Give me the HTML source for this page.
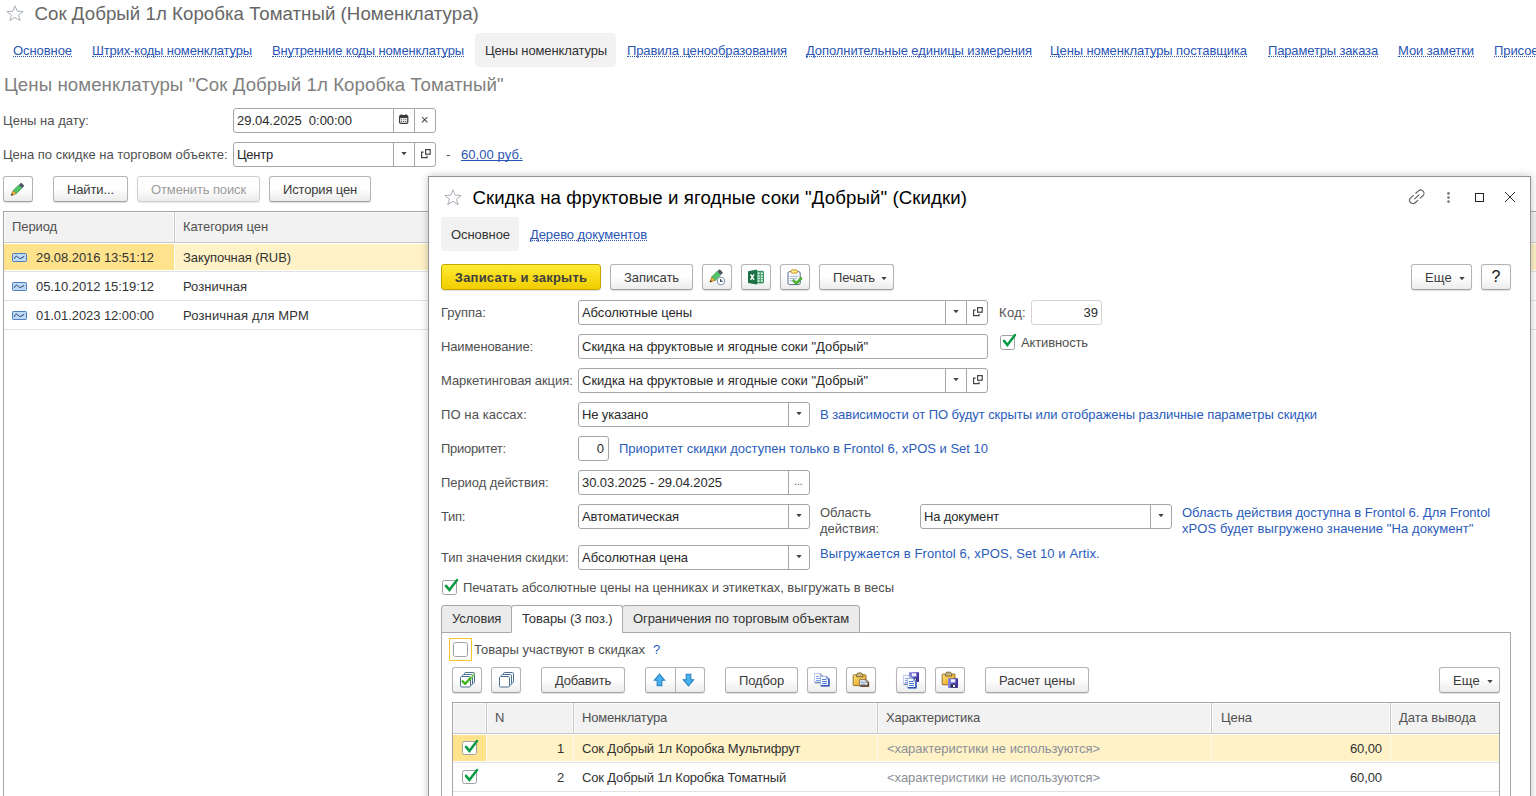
<!DOCTYPE html>
<html lang="ru">
<head>
<meta charset="utf-8">
<title>Сок Добрый 1л Коробка Томатный (Номенклатура)</title>
<style>
*{box-sizing:border-box;margin:0;padding:0}
html,body{width:1536px;height:796px;overflow:hidden;background:#fff}
body{font-family:"Liberation Sans",Arial,sans-serif;font-size:13px;color:#333;position:relative}
.abs{position:absolute;white-space:nowrap}
.t{position:absolute;white-space:nowrap;line-height:16px;height:16px;color:#333}
.lnk{color:#2a55b5}
.nav{position:absolute;line-height:16px;white-space:nowrap;color:#2a55b5;border-bottom:1px dotted #2a55b5;height:14px}
.lbl{color:#505050}
.inp{position:absolute;height:25px;border:1px solid #a6a6a6;border-radius:3px;background:#fff;overflow:hidden}
.inp .v{position:absolute;left:3px;top:4px;line-height:16px;white-space:nowrap;color:#2a2a2a}
.inp .sep{position:absolute;top:0;bottom:0;width:1px;background:#a6a6a6}
.btn{position:absolute;height:26px;border:1px solid #b4b4b4;border-bottom-color:#a2a2a2;border-radius:3px;background:linear-gradient(#fff 0%,#fff 45%,#ececec 100%);box-shadow:0 1px 1px rgba(0,0,0,.13);text-align:center;line-height:25px;white-space:nowrap;color:#3a3a3a}
.btn.dis{color:#9c9c9c;border-color:#cdcdcd;box-shadow:0 1px 1px rgba(0,0,0,.08)}
.btn.yel{background:linear-gradient(#ffeb33,#f1cd00);border-color:#c6a500;font-weight:bold;color:#3f3f3f}
.hint{color:#2a5cbc}
.cb{position:absolute;width:15px;height:15px;border:1px solid #a0a0a0;border-radius:2.5px;background:#fff}
.tab{position:absolute;height:28px;border:1px solid #a8a8a8;background:#ebebeb;white-space:nowrap;color:#333;border-radius:3px 3px 0 0}
.tab.act{background:#fff;border-bottom-color:#fff}
</style>
</head>
<body>
<svg class="abs" style="left:6px;top:5px;overflow:visible" width="18" height="17" viewBox="0 0 18 17" ><path d="M9 0.8 L11.2 6.2 L17.2 6.5 L12.5 10.1 L14.2 15.6 L9 12.3 L3.8 15.6 L5.5 10.1 L0.8 6.5 L6.8 6.2 Z" fill="none" stroke="#a9b0b7" stroke-width="1"/></svg>
<div class="abs" style="left:34.5px;top:3px;font-size:18.67px;line-height:22px;color:#666;letter-spacing:.045px">Сок Добрый 1л Коробка Томатный (Номенклатура)</div>
<div class="nav" style="left:13px;top:43px;letter-spacing:-0.071px;">Основное</div>
<div class="nav" style="left:92px;top:43px;letter-spacing:-0.159px;">Штрих-коды номенклатуры</div>
<div class="nav" style="left:272px;top:43px;letter-spacing:-0.132px;">Внутренние коды номенклатуры</div>
<div class="abs" style="left:475px;top:33px;width:141px;height:34px;background:#f2f2f2;border-radius:4px"></div>
<div class="t " style="left:485px;top:43px;letter-spacing:-0.125px;color:#333">Цены номенклатуры</div>
<div class="nav" style="left:627px;top:43px;letter-spacing:-0.124px;">Правила ценообразования</div>
<div class="nav" style="left:806px;top:43px;letter-spacing:-0.078px;">Дополнительные единицы измерения</div>
<div class="nav" style="left:1050px;top:43px;letter-spacing:-0.093px;">Цены номенклатуры поставщика</div>
<div class="nav" style="left:1268px;top:43px;letter-spacing:-0.147px;">Параметры заказа</div>
<div class="nav" style="left:1398px;top:43px;letter-spacing:-0.083px;">Мои заметки</div>
<div class="nav" style="left:1494px;top:43px;letter-spacing:-0.079px;">Присоединенные файлы</div>
<div class="abs" style="left:4px;top:74px;font-size:18.67px;line-height:22px;color:#7f7f7f;letter-spacing:.07px">Цены номенклатуры "Сок Добрый 1л Коробка Томатный"</div>
<div class="t lbl" style="left:3px;top:113px;letter-spacing:0.020px;">Цены на дату:</div>
<div class="inp" style="left:233px;top:108px;width:203px;"><span class="v" style="letter-spacing:-0.035px;">29.04.2025&nbsp; 0:00:00</span><i class="sep" style="left:159px"></i><i class="sep" style="left:180px"></i></div>
<svg class="abs" style="left:399px;top:114px;overflow:visible" width="10" height="10" viewBox="0 0 10 10" ><rect x=".6" y="1.7" width="8.2" height="7.6" rx="1" fill="#fff" stroke="#3c3c3c" stroke-width="1.2"/><rect x=".6" y="1.7" width="8.2" height="2.3" fill="#3c3c3c"/><path d="M2.5 0.2 V2 M6.9 0.2 V2" stroke="#3c3c3c" stroke-width="1.4"/><path d="M2 5.3 H3.2 M4.1 5.3 H5.3 M6.2 5.3 H7.4 M2 7.4 H3.2 M4.1 7.4 H5.3 M6.2 7.4 H7.4" stroke="#555" stroke-width="1.1"/></svg>
<svg class="abs" style="left:422px;top:117px;overflow:visible" width="5.4" height="5.4" viewBox="0 0 5.4 5.4" ><path d="M0 0 L5.4 5.4 M5.4 0 L0 5.4" stroke="#3c3c3c" stroke-width="1.05"/></svg>
<div class="t lbl" style="left:3px;top:147px;letter-spacing:-0.013px;">Цена по скидке на торговом объекте:</div>
<div class="inp" style="left:233px;top:142px;width:203px;"><span class="v" style="letter-spacing:-0.242px;">Центр</span><i class="sep" style="left:159px"></i><i class="sep" style="left:180px"></i></div>
<svg class="abs" style="left:401px;top:152px;overflow:visible" width="6" height="4" viewBox="0 0 6 4" ><path d="M.3 0 H5.7 L3 3.3 Z" fill="#444"/></svg>
<svg class="abs" style="left:421px;top:149px;overflow:visible" width="10" height="9" viewBox="0 0 10 9" ><rect x="4.6" y=".6" width="4.6" height="4.6" fill="none" stroke="#444" stroke-width="1.2"/><path d="M2.6 3.2 H.6 V8.6 H6 V6.8" fill="none" stroke="#444" stroke-width="1.2"/></svg>
<div class="t lbl" style="left:446px;top:147px;letter-spacing:-0.329px;">-</div>
<div class="t lnk" style="left:461px;top:147px;letter-spacing:0.077px;text-decoration:underline;text-underline-offset:1px;text-decoration-skip-ink:none;text-decoration-thickness:1px">60,00 руб.</div>
<div class="btn " style="left:3px;top:176px;width:30px;"></div>
<svg class="abs" style="left:3px;top:176px;overflow:visible" width="30" height="26" viewBox="0 0 30 26" ><g transform="translate(8,19.6) rotate(-44.0)"><polygon points="0,0 5.41,-2.3 5.41,2.3" fill="#f5b543" stroke="#9a6c25" stroke-width=".7" stroke-linejoin="round"/><polygon points="0,0 2.06,-0.87 2.06,0.87" fill="#3d2a10"/><rect x="5.41" y="-2.3" width="7.55" height="4.6" fill="#52c468" stroke="#2f9a48" stroke-width=".6"/><rect x="12.96" y="-2.3" width="3.45" height="4.6" rx=".9" fill="#4a5666"/></g></svg>
<div class="btn " style="left:53px;top:176px;width:75px;"><span style="letter-spacing:-0.116px;">Найти...</span></div>
<div class="btn dis" style="left:137px;top:176px;width:123px;"><span style="letter-spacing:-0.124px;">Отменить поиск</span></div>
<div class="btn " style="left:269px;top:176px;width:102px;"><span style="letter-spacing:-0.158px;">История цен</span></div>
<div class="abs" style="left:3px;top:211px;width:1540px;height:600px;border:1px solid #a6a6a6;background:#fff"></div>
<div class="abs" style="left:4px;top:212px;width:1532px;height:30px;background:#f2f2f2;box-shadow:inset 1px 1px 0 #fbfbfb"></div>
<div class="abs" style="left:4px;top:242px;width:1532px;height:1px;background:#c8c8c8"></div>
<div class="abs" style="left:173px;top:212px;width:1px;height:30px;background:#fbfbfb"></div>
<div class="abs" style="left:174px;top:212px;width:1px;height:30px;background:#c8c8c8"></div>
<div class="abs" style="left:175px;top:212px;width:1px;height:30px;background:#fbfbfb"></div>
<div class="t lbl" style="left:12px;top:219px;letter-spacing:-0.099px;">Период</div>
<div class="t lbl" style="left:183px;top:219px;letter-spacing:-0.084px;">Категория цен</div>
<div class="abs" style="left:4px;top:244px;width:170px;height:26px;background:#ffe28c"></div>
<div class="abs" style="left:175px;top:244px;width:1361px;height:26px;background:#fff2c7"></div>
<div class="abs" style="left:4px;top:271px;width:1532px;height:1px;background:#e2e2e2"></div>
<div class="abs" style="left:4px;top:300px;width:1532px;height:1px;background:#e2e2e2"></div>
<div class="abs" style="left:4px;top:329px;width:1532px;height:1px;background:#e2e2e2"></div>
<svg class="abs" style="left:12px;top:253px;overflow:visible" width="15" height="9" viewBox="0 0 15 9" ><rect x=".5" y=".5" width="14" height="8" rx=".8" fill="#bfd8f3" stroke="#4f7fbf"/><path d="M2.4 5.8 C3.6 2.6 4.8 2.6 6.2 4.4 S8.6 5.6 12.2 3.4" fill="none" stroke="#17376f" stroke-width="1"/></svg>
<div class="t " style="left:36px;top:250px;letter-spacing:-0.067px;">29.08.2016 13:51:12</div>
<div class="t " style="left:183px;top:250px;letter-spacing:-0.084px;">Закупочная (RUB)</div>
<svg class="abs" style="left:12px;top:282px;overflow:visible" width="15" height="9" viewBox="0 0 15 9" ><rect x=".5" y=".5" width="14" height="8" rx=".8" fill="#bfd8f3" stroke="#4f7fbf"/><path d="M2.4 5.8 C3.6 2.6 4.8 2.6 6.2 4.4 S8.6 5.6 12.2 3.4" fill="none" stroke="#17376f" stroke-width="1"/></svg>
<div class="t " style="left:36px;top:279px;letter-spacing:-0.067px;">05.10.2012 15:19:12</div>
<div class="t " style="left:183px;top:279px;letter-spacing:0.021px;">Розничная</div>
<svg class="abs" style="left:12px;top:311px;overflow:visible" width="15" height="9" viewBox="0 0 15 9" ><rect x=".5" y=".5" width="14" height="8" rx=".8" fill="#bfd8f3" stroke="#4f7fbf"/><path d="M2.4 5.8 C3.6 2.6 4.8 2.6 6.2 4.4 S8.6 5.6 12.2 3.4" fill="none" stroke="#17376f" stroke-width="1"/></svg>
<div class="t " style="left:36px;top:308px;letter-spacing:-0.067px;">01.01.2023 12:00:00</div>
<div class="t " style="left:183px;top:308px;letter-spacing:0.152px;">Розничная для МРМ</div>
<div class="abs" style="left:428px;top:176px;width:1103px;height:640px;background:#fff;border:1px solid #939393;box-shadow:0 0 8px rgba(0,0,0,.24)"></div>
<svg class="abs" style="left:444px;top:189px;overflow:visible" width="18" height="17" viewBox="0 0 18 17" ><path d="M9 0.8 L11.2 6.2 L17.2 6.5 L12.5 10.1 L14.2 15.6 L9 12.3 L3.8 15.6 L5.5 10.1 L0.8 6.5 L6.8 6.2 Z" fill="none" stroke="#a9b0b7" stroke-width="1"/></svg>
<div class="abs" style="left:472.5px;top:187px;font-size:18.67px;line-height:22px;color:#000;letter-spacing:.085px">Скидка на фруктовые и ягодные соки "Добрый" (Скидки)</div>
<svg class="abs" style="left:1408.5px;top:188.5px;overflow:visible" width="16" height="16" viewBox="0 0 16 16" ><g transform="translate(7.8,7.8) rotate(-42)" fill="none" stroke="#5c5c5c" stroke-width="1.1" stroke-linecap="round"><path d="M-1.6 -3.3 H-5.2 A3.3 3.3 0 0 0 -5.2 3.3 H-1.6"/><path d="M1.6 -3.3 H5.2 A3.3 3.3 0 0 1 5.2 3.3 H1.6"/><path d="M-3 0 H3"/></g></svg>
<svg class="abs" style="left:1446px;top:191px;overflow:visible" width="5" height="13" viewBox="0 0 5 13" ><circle cx="2.5" cy="2.4" r="1.35" fill="#777"/><circle cx="2.5" cy="6.5" r="1.35" fill="#777"/><circle cx="2.5" cy="10.6" r="1.35" fill="#777"/></svg>
<div class="abs" style="left:1475px;top:193px;width:9px;height:9px;border:1px solid #222"></div>
<svg class="abs" style="left:1505px;top:192px;overflow:visible" width="10" height="10" viewBox="0 0 10 10" ><path d="M0 0 L10 10 M10 0 L0 10" stroke="#333" stroke-width="1"/></svg>
<div class="abs" style="left:441px;top:217px;width:78px;height:34px;background:#f2f2f2;border-radius:4px"></div>
<div class="t " style="left:451px;top:227px;letter-spacing:-0.071px;color:#333">Основное</div>
<div class="nav" style="left:530px;top:227px;letter-spacing:-0.082px;">Дерево документов</div>
<div class="btn yel" style="left:441px;top:264px;width:160px;"><span style="letter-spacing:0.192px;">Записать и закрыть</span></div>
<div class="btn " style="left:610px;top:264px;width:83px;"><span style="letter-spacing:-0.069px;">Записать</span></div>
<div class="btn " style="left:702px;top:264px;width:30px;"></div>
<svg class="abs" style="left:702px;top:264px;overflow:visible" width="30" height="26" viewBox="0 0 30 26" ><g transform="translate(7.9,18.1) rotate(-44.5)"><polygon points="0,0 5.27,-2.5 5.27,2.5" fill="#f5b543" stroke="#9a6c25" stroke-width=".7" stroke-linejoin="round"/><polygon points="0,0 2.00,-0.95 2.00,0.95" fill="#3d2a10"/><rect x="5.27" y="-2.5" width="7.35" height="5.0" fill="#52c468" stroke="#2f9a48" stroke-width=".6"/><rect x="12.63" y="-2.5" width="3.36" height="5.0" rx=".9" fill="#4a5666"/></g><circle cx="19" cy="17" r="3.7" fill="#fff" stroke="#7d9ab8" stroke-width="1.1"/><path d="M18.6 15.2 V17.3 H20.6" fill="none" stroke="#1c2430" stroke-width="1.1"/></svg>
<div class="btn " style="left:741px;top:264px;width:30px;"></div>
<svg class="abs" style="left:741px;top:264px;overflow:visible" width="30" height="26" viewBox="0 0 30 26" ><rect x="15" y="7.3" width="7.4" height="11.6" rx=".6" fill="#4fa578" stroke="#2c8a57" stroke-width="1"/><path d="M16.6 9.3 H18.6 M20 9.3 H21.8 M16.6 11.9 H18.6 M20 11.9 H21.8 M16.6 14.5 H18.6 M20 14.5 H21.8 M16.6 17.1 H18.6 M20 17.1 H21.8" stroke="#e4f3ea" stroke-width="1.5"/><polygon points="7,7.2 16,5.4 16,20.6 7,18.9" fill="#1d7245"/><path d="M9.6 10.4 L13 15.9 M13 10.4 L9.6 15.9" stroke="#fff" stroke-width="1.4"/></svg>
<div class="btn " style="left:780px;top:264px;width:30px;"></div>
<svg class="abs" style="left:780px;top:264px;overflow:visible" width="30" height="26" viewBox="0 0 30 26" ><rect x="8" y="7.6" width="12.2" height="13" rx="1.6" fill="#f8fbff" stroke="#566a88" stroke-width="1"/><rect x="11" y="5.9" width="6.4" height="3.2" rx="1.2" fill="#fff38a" stroke="#c68c1c" stroke-width="1"/><path d="M10 12.4 H18 M10 14.6 H17 M10 16.8 H12.5" stroke="#9fb0c6" stroke-width=".9"/><path d="M13.6 16.6 L16.4 19.3 L21 14.4" fill="none" stroke="#2f9a1c" stroke-width="2.5" stroke-linecap="round" stroke-linejoin="round"/><path d="M13.7 16.4 L16.4 18.9 L20.9 14.2" fill="none" stroke="#5cc93a" stroke-width="1.1" stroke-linecap="round" stroke-linejoin="round"/></svg>
<div class="btn " style="left:819px;top:264px;width:75px;"><span style="position:absolute;left:13px;top:0;letter-spacing:-0.098px;">Печать</span></div>
<svg class="abs" style="left:881px;top:277px;overflow:visible" width="6" height="4" viewBox="0 0 6 4" ><path d="M.3 0 H5.7 L3 3.3 Z" fill="#444"/></svg>
<div class="btn " style="left:1411px;top:264px;width:61px;"><span style="position:absolute;left:13px;top:0;letter-spacing:0.183px;">Еще</span></div>
<svg class="abs" style="left:1459px;top:277px;overflow:visible" width="6" height="4" viewBox="0 0 6 4" ><path d="M.3 0 H5.7 L3 3.3 Z" fill="#444"/></svg>
<div class="btn " style="left:1481px;top:264px;width:30px;"></div>
<div class="abs" style="left:1481px;top:264px;width:30px;text-align:center;font-size:16px;line-height:25px;color:#111">?</div>
<div class="t lbl" style="left:441px;top:305px;letter-spacing:0.027px;">Группа:</div>
<div class="inp" style="left:578px;top:300px;width:410px;"><span class="v" style="letter-spacing:-0.065px;">Абсолютные цены</span><i class="sep" style="left:366px"></i><i class="sep" style="left:387px"></i></div>
<svg class="abs" style="left:953px;top:310px;overflow:visible" width="6" height="4" viewBox="0 0 6 4" ><path d="M.3 0 H5.7 L3 3.3 Z" fill="#444"/></svg>
<svg class="abs" style="left:973px;top:307px;overflow:visible" width="10" height="9" viewBox="0 0 10 9" ><rect x="4.6" y=".6" width="4.6" height="4.6" fill="none" stroke="#444" stroke-width="1.2"/><path d="M2.6 3.2 H.6 V8.6 H6 V6.8" fill="none" stroke="#444" stroke-width="1.2"/></svg>
<div class="t lbl" style="left:999px;top:305px;letter-spacing:0.321px;">Код:</div>
<div class="inp" style="left:1031px;top:300px;width:71px;border-color:#d4d4d4"><span class="v" style="left:auto;right:3px">39</span></div>
<div class="t lbl" style="left:441px;top:339px;letter-spacing:-0.133px;">Наименование:</div>
<div class="inp" style="left:578px;top:334px;width:410px;"><span class="v" style="letter-spacing:-0.009px;">Скидка на фруктовые и ягодные соки "Добрый"</span></div>
<div class="cb" style="left:1000px;top:335px;width:15px;height:15px"></div>
<svg class="abs" style="left:1000px;top:335px;overflow:visible" width="16" height="15" viewBox="0 0 16 15" ><path d="M4 5.9 L7.4 9.9 L15 0" fill="none" stroke="#089a42" stroke-width="2.5" stroke-linecap="round" stroke-linejoin="miter"/></svg>
<div class="t lbl" style="left:1021px;top:335px;letter-spacing:-0.126px;">Активность</div>
<div class="t lbl" style="left:441px;top:373px;letter-spacing:-0.068px;">Маркетинговая акция:</div>
<div class="inp" style="left:578px;top:368px;width:410px;"><span class="v" style="letter-spacing:-0.009px;">Скидка на фруктовые и ягодные соки "Добрый"</span><i class="sep" style="left:366px"></i><i class="sep" style="left:387px"></i></div>
<svg class="abs" style="left:953px;top:378px;overflow:visible" width="6" height="4" viewBox="0 0 6 4" ><path d="M.3 0 H5.7 L3 3.3 Z" fill="#444"/></svg>
<svg class="abs" style="left:973px;top:375px;overflow:visible" width="10" height="9" viewBox="0 0 10 9" ><rect x="4.6" y=".6" width="4.6" height="4.6" fill="none" stroke="#444" stroke-width="1.2"/><path d="M2.6 3.2 H.6 V8.6 H6 V6.8" fill="none" stroke="#444" stroke-width="1.2"/></svg>
<div class="t lbl" style="left:441px;top:407px;letter-spacing:0.097px;">ПО на кассах:</div>
<div class="inp" style="left:578px;top:402px;width:232px;"><span class="v" style="letter-spacing:-0.139px;">Не указано</span><i class="sep" style="left:209px"></i></div>
<svg class="abs" style="left:796px;top:412px;overflow:visible" width="6" height="4" viewBox="0 0 6 4" ><path d="M.3 0 H5.7 L3 3.3 Z" fill="#444"/></svg>
<div class="t hint" style="left:820px;top:407px;letter-spacing:-0.046px;">В зависимости от ПО будут скрыты или отображены различные параметры скидки</div>
<div class="t lbl" style="left:441px;top:441px;letter-spacing:-0.293px;">Приоритет:</div>
<div class="inp" style="left:578px;top:436px;width:31px"><span class="v" style="left:auto;right:4px">0</span></div>
<div class="t hint" style="left:619px;top:441px;letter-spacing:-0.003px;">Приоритет скидки доступен только в Frontol 6, xPOS и Set 10</div>
<div class="t lbl" style="left:441px;top:475px;letter-spacing:-0.066px;">Период действия:</div>
<div class="inp" style="left:578px;top:470px;width:232px;"><span class="v" style="letter-spacing:-0.073px;">30.03.2025 - 29.04.2025</span><i class="sep" style="left:209px"></i></div>
<div class="t" style="left:794px;top:474px;color:#4a4a4a;font-size:10px;letter-spacing:.1px">...</div>
<div class="t lbl" style="left:441px;top:509px;letter-spacing:-0.321px;">Тип:</div>
<div class="inp" style="left:578px;top:504px;width:232px;"><span class="v" style="letter-spacing:-0.084px;">Автоматическая</span><i class="sep" style="left:209px"></i></div>
<svg class="abs" style="left:796px;top:514px;overflow:visible" width="6" height="4" viewBox="0 0 6 4" ><path d="M.3 0 H5.7 L3 3.3 Z" fill="#444"/></svg>
<div class="abs lbl" style="left:820px;top:505px;line-height:16px"><span style="letter-spacing:-0.002px;">Область</span><br><span style="letter-spacing:-0.039px;">действия:</span></div>
<div class="inp" style="left:920px;top:504px;width:252px;"><span class="v" style="letter-spacing:-0.139px;">На документ</span><i class="sep" style="left:229px"></i></div>
<svg class="abs" style="left:1158px;top:514px;overflow:visible" width="6" height="4" viewBox="0 0 6 4" ><path d="M.3 0 H5.7 L3 3.3 Z" fill="#444"/></svg>
<div class="abs hint" style="left:1182px;top:505px;line-height:16px"><span style="letter-spacing:-0.026px;">Область действия доступна в Frontol 6. Для Frontol</span><br><span style="letter-spacing:0.069px;">xPOS будет выгружено значение "На документ"</span></div>
<div class="t lbl" style="left:441px;top:550px;letter-spacing:-0.008px;">Тип значения скидки:</div>
<div class="inp" style="left:578px;top:545px;width:232px;"><span class="v" style="letter-spacing:-0.038px;">Абсолютная цена</span><i class="sep" style="left:209px"></i></div>
<svg class="abs" style="left:796px;top:555px;overflow:visible" width="6" height="4" viewBox="0 0 6 4" ><path d="M.3 0 H5.7 L3 3.3 Z" fill="#444"/></svg>
<div class="t hint" style="left:820px;top:546px;letter-spacing:0.125px;">Выгружается в Frontol 6, xPOS, Set 10 и Artix.</div>
<div class="cb" style="left:442px;top:580px;width:15px;height:15px"></div>
<svg class="abs" style="left:442px;top:580px;overflow:visible" width="16" height="15" viewBox="0 0 16 15" ><path d="M4 5.9 L7.4 9.9 L15 0" fill="none" stroke="#089a42" stroke-width="2.5" stroke-linecap="round" stroke-linejoin="miter"/></svg>
<div class="t lbl" style="left:463px;top:580px;letter-spacing:-0.024px;">Печатать абсолютные цены на ценниках и этикетках, выгружать в весы</div>
<div class="abs" style="left:441px;top:632px;width:1070px;height:200px;border:1px solid #a8a8a8;background:#fff"></div>
<div class="tab" style="left:441px;top:605px;width:71px"></div>
<div class="tab act" style="left:511px;top:605px;width:112px"></div>
<div class="tab" style="left:622px;top:605px;width:238px"></div>
<div class="t " style="left:452px;top:611px;letter-spacing:-0.108px;color:#333">Условия</div>
<div class="t " style="left:522px;top:611px;letter-spacing:-0.062px;color:#333">Товары (3 поз.)</div>
<div class="t " style="left:633px;top:611px;letter-spacing:-0.090px;color:#333">Ограничения по торговым объектам</div>
<div class="abs" style="left:449px;top:638px;width:23px;height:23px;border:1px solid #f6c327"></div>
<div class="cb" style="left:453px;top:642px;width:15px;height:15px"></div>
<div class="t lbl" style="left:474px;top:642px;letter-spacing:0.012px;">Товары участвуют в скидках</div>
<div class="t hint" style="left:653px;top:642px;letter-spacing:-0.230px;">?</div>
<div class="btn " style="left:452px;top:667px;width:30px;"></div>
<svg class="abs" style="left:452px;top:667px;overflow:visible" width="30" height="26" viewBox="0 0 30 26" ><rect x="12.5" y="5.5" width="10" height="10.5" rx="1.2" fill="#fff" stroke="#4d7090" stroke-width="1"/><rect x="10.5" y="7.5" width="10" height="10.5" rx="1.2" fill="#fff" stroke="#4d7090" stroke-width="1"/><rect x="8.5" y="9.5" width="10" height="10.5" rx="1.2" fill="#fff" stroke="#4d7090" stroke-width="1"/><path d="M17.5 12.5 L21 9 L22.4 6.2" fill="none" stroke="#7fcf5a" stroke-width="2" opacity=".8"/><path d="M10.6 14.3 L13.2 16.8 L18.3 11.2" fill="none" stroke="#3fb51c" stroke-width="2.4" stroke-linecap="round" stroke-linejoin="round"/></svg>
<div class="btn " style="left:491px;top:667px;width:30px;"></div>
<svg class="abs" style="left:491px;top:667px;overflow:visible" width="30" height="26" viewBox="0 0 30 26" ><rect x="12.5" y="5.5" width="10" height="10.5" rx="1.2" fill="#fff" stroke="#4d7090" stroke-width="1"/><rect x="10.5" y="7.5" width="10" height="10.5" rx="1.2" fill="#fff" stroke="#4d7090" stroke-width="1"/><rect x="8.5" y="9.5" width="10" height="10.5" rx="1.2" fill="#fff" stroke="#4d7090" stroke-width="1"/></svg>
<div class="btn " style="left:541px;top:667px;width:84px;"><span style="letter-spacing:-0.182px;">Добавить</span></div>
<div class="btn " style="left:645px;top:667px;width:60px;"></div>
<div class="abs" style="left:675px;top:668px;width:1px;height:24px;background:#b2b2b2"></div>
<svg class="abs" style="left:645px;top:667px;overflow:visible" width="60" height="26" viewBox="0 0 60 26" ><path d="M14.5 7.2 L19.6 13.2 H16.8 V18.8 H12.2 V13.2 H9.4 Z" fill="#48b1ef" stroke="#2680c0" stroke-width="1.1" stroke-linejoin="miter"/><path d="M43.5 18.8 L48.6 12.8 H45.8 V7.2 H41.2 V12.8 H38.4 Z" fill="#48b1ef" stroke="#2680c0" stroke-width="1.1" stroke-linejoin="miter"/></svg>
<div class="btn " style="left:725px;top:667px;width:73px;"><span style="letter-spacing:-0.130px;">Подбор</span></div>
<div class="btn " style="left:807px;top:667px;width:30px;"></div>
<svg class="abs" style="left:807px;top:667px;overflow:visible" width="30" height="26" viewBox="0 0 30 26" ><path d="M7.5 6.4 H13.200000000000001 L15.8 9.0 V15.8 H7.5 Z" fill="#fff" stroke="#a9bce6" stroke-width=".8" stroke-linejoin="round"/><path d="M15.5 9.0 V15.5 H8.1" fill="none" stroke="#6f86bd" stroke-width="1.5"/><path d="M13.200000000000001 6.4 V9.0 H15.8 Z" fill="#dfe8fa" stroke="#6f86bd" stroke-width=".6" stroke-linejoin="round"/><path d="M9.2 9.5 H12.2 M9.2 11.5 H13.6 M9.2 13.5 H13.6 " stroke="#7aa2ea" stroke-width="1" shape-rendering="crispEdges"/><path d="M13.4 9.4 H19.6 L22.200000000000003 12.0 V19.0 H13.4 Z" fill="#fff" stroke="#8fa8dc" stroke-width=".8" stroke-linejoin="round"/><path d="M21.900000000000002 12.0 V18.7 H14.0" fill="none" stroke="#2b52b4" stroke-width="1.5"/><path d="M19.6 9.4 V12.0 H22.200000000000003 Z" fill="#dfe8fa" stroke="#2b52b4" stroke-width=".6" stroke-linejoin="round"/><path d="M15.1 12.5 H18.6 M15.1 14.5 H20.0 M15.1 16.5 H20.0 " stroke="#4478de" stroke-width="1" shape-rendering="crispEdges"/></svg>
<div class="btn " style="left:846px;top:667px;width:30px;"></div>
<svg class="abs" style="left:846px;top:667px;overflow:visible" width="30" height="26" viewBox="0 0 30 26" ><defs><linearGradient id="gcl1" x1="0" y1="0" x2="1" y2="1"><stop offset="0" stop-color="#ffe682"/><stop offset="1" stop-color="#e8960a"/></linearGradient></defs><rect x="7.2" y="7.8" width="12.8" height="10.8" rx=".8" fill="url(#gcl1)" stroke="#8a6418" stroke-width=".9"/><path d="M10.200000000000001 9.8 L11.600000000000001 6.0 H15.600000000000001 L17.0 9.8 Z" fill="#e6d38c" stroke="#6f5a2a" stroke-width=".9" stroke-linejoin="round"/><circle cx="13.600000000000001" cy="7.8999999999999995" r=".9" fill="#fff" stroke="#6f5a2a" stroke-width=".5"/><path d="M13.6 12.6 H20.0 L22.6 15.2 V19.2 H13.6 Z" fill="#dde6f3" stroke="#7a6a58" stroke-width=".8" stroke-linejoin="round"/><path d="M22.3 15.2 V18.9 H14.2" fill="none" stroke="#5a3a1a" stroke-width="1.5"/><path d="M20.0 12.6 V15.2 H22.6 Z" fill="#dfe8fa" stroke="#5a3a1a" stroke-width=".6" stroke-linejoin="round"/><path d="M15.299999999999999 15.5 H19.0 M15.299999999999999 17.5 H20.4 " stroke="#8c9cc0" stroke-width="1" shape-rendering="crispEdges"/></svg>
<div class="btn " style="left:896px;top:667px;width:30px;"></div>
<svg class="abs" style="left:896px;top:667px;overflow:visible" width="30" height="26" viewBox="0 0 30 26" ><defs><linearGradient id="gfl2" x1="0" y1="0" x2="1" y2="0"><stop offset="0" stop-color="#8d8ae0"/><stop offset=".5" stop-color="#5a53c2"/><stop offset="1" stop-color="#3a3096"/></linearGradient></defs><rect x="13" y="5.2" width="10" height="9.8" rx=".6" fill="url(#gfl2)"/><rect x="15.8" y="6.2" width="4.6" height="3.2" fill="#f2f4ff"/><rect x="15.8" y="11.4" width="5" height="3.1" fill="#2a2f3c"/><rect x="18" y="11.9" width="2" height="2.2" fill="#e8e8e8"/><path d="M7.4 8.4 H13.200000000000001 L15.8 11.0 V17.6 H7.4 Z" fill="#fff" stroke="#a9bce6" stroke-width=".8" stroke-linejoin="round"/><path d="M15.5 11.0 V17.3 H8.0" fill="none" stroke="#6f86bd" stroke-width="1.5"/><path d="M13.200000000000001 8.4 V11.0 H15.8 Z" fill="#dfe8fa" stroke="#6f86bd" stroke-width=".6" stroke-linejoin="round"/><path d="M9.1 11.5 H12.2 M9.1 13.5 H13.6 M9.1 15.5 H13.6 " stroke="#7aa2ea" stroke-width="1" shape-rendering="crispEdges"/><path d="M11.4 11.6 H17.6 L20.200000000000003 14.2 V21.0 H11.4 Z" fill="#fff" stroke="#8fa8dc" stroke-width=".8" stroke-linejoin="round"/><path d="M19.900000000000002 14.2 V20.7 H12.0" fill="none" stroke="#2b52b4" stroke-width="1.5"/><path d="M17.6 11.6 V14.2 H20.200000000000003 Z" fill="#dfe8fa" stroke="#2b52b4" stroke-width=".6" stroke-linejoin="round"/><path d="M13.1 14.5 H16.6 M13.1 16.5 H18.0 M13.1 18.5 H18.0 " stroke="#4478de" stroke-width="1" shape-rendering="crispEdges"/></svg>
<div class="btn " style="left:935px;top:667px;width:30px;"></div>
<svg class="abs" style="left:935px;top:667px;overflow:visible" width="30" height="26" viewBox="0 0 30 26" ><defs><linearGradient id="gcl3" x1="0" y1="0" x2="1" y2="1"><stop offset="0" stop-color="#ffe682"/><stop offset="1" stop-color="#e8960a"/></linearGradient></defs><rect x="7.2" y="7.0" width="12.8" height="10.8" rx=".8" fill="url(#gcl3)" stroke="#8a6418" stroke-width=".9"/><path d="M10.200000000000001 9.0 L11.600000000000001 5.2 H15.600000000000001 L17.0 9.0 Z" fill="#e6d38c" stroke="#6f5a2a" stroke-width=".9" stroke-linejoin="round"/><circle cx="13.600000000000001" cy="7.1" r=".9" fill="#fff" stroke="#6f5a2a" stroke-width=".5"/><defs><linearGradient id="gfl4" x1="0" y1="0" x2="1" y2="0"><stop offset="0" stop-color="#8d8ae0"/><stop offset=".5" stop-color="#5a53c2"/><stop offset="1" stop-color="#3a3096"/></linearGradient></defs><rect x="13" y="11.2" width="10" height="9.8" rx=".6" fill="url(#gfl4)"/><rect x="15.8" y="12.2" width="4.6" height="3.2" fill="#f2f4ff"/><rect x="15.8" y="17.4" width="5" height="3.1" fill="#2a2f3c"/><rect x="18" y="17.9" width="2" height="2.2" fill="#e8e8e8"/></svg>
<div class="btn " style="left:985px;top:667px;width:104px;"><span style="letter-spacing:-0.001px;">Расчет цены</span></div>
<div class="btn " style="left:1439px;top:667px;width:61px;"><span style="position:absolute;left:13px;top:0;letter-spacing:0.183px;">Еще</span></div>
<svg class="abs" style="left:1487px;top:680px;overflow:visible" width="6" height="4" viewBox="0 0 6 4" ><path d="M.3 0 H5.7 L3 3.3 Z" fill="#444"/></svg>
<div class="abs" style="left:452px;top:702px;width:1048px;height:120px;border:1px solid #a6a6a6;background:#fff"></div>
<div class="abs" style="left:453px;top:703px;width:1046px;height:30px;background:#f2f2f2;box-shadow:inset 1px 1px 0 #fbfbfb"></div>
<div class="abs" style="left:453px;top:733px;width:1046px;height:1px;background:#c8c8c8"></div>
<div class="abs" style="left:485px;top:703px;width:1px;height:30px;background:#fbfbfb"></div>
<div class="abs" style="left:486px;top:703px;width:1px;height:30px;background:#c8c8c8"></div>
<div class="abs" style="left:487px;top:703px;width:1px;height:30px;background:#fbfbfb"></div>
<div class="abs" style="left:572px;top:703px;width:1px;height:30px;background:#fbfbfb"></div>
<div class="abs" style="left:573px;top:703px;width:1px;height:30px;background:#c8c8c8"></div>
<div class="abs" style="left:574px;top:703px;width:1px;height:30px;background:#fbfbfb"></div>
<div class="abs" style="left:876px;top:703px;width:1px;height:30px;background:#fbfbfb"></div>
<div class="abs" style="left:877px;top:703px;width:1px;height:30px;background:#c8c8c8"></div>
<div class="abs" style="left:878px;top:703px;width:1px;height:30px;background:#fbfbfb"></div>
<div class="abs" style="left:1210px;top:703px;width:1px;height:30px;background:#fbfbfb"></div>
<div class="abs" style="left:1211px;top:703px;width:1px;height:30px;background:#c8c8c8"></div>
<div class="abs" style="left:1212px;top:703px;width:1px;height:30px;background:#fbfbfb"></div>
<div class="abs" style="left:1389px;top:703px;width:1px;height:30px;background:#fbfbfb"></div>
<div class="abs" style="left:1390px;top:703px;width:1px;height:30px;background:#c8c8c8"></div>
<div class="abs" style="left:1391px;top:703px;width:1px;height:30px;background:#fbfbfb"></div>
<div class="abs" style="left:453px;top:735px;width:1046px;height:26px;background:#fff2c7"></div>
<div class="abs" style="left:453px;top:735px;width:33px;height:26px;background:#ffe28c"></div>
<div class="abs" style="left:486px;top:735px;width:1px;height:26px;background:#fffaf0"></div>
<div class="abs" style="left:573px;top:735px;width:1px;height:26px;background:#fffaf0"></div>
<div class="abs" style="left:877px;top:735px;width:1px;height:26px;background:#fffaf0"></div>
<div class="abs" style="left:1211px;top:735px;width:1px;height:26px;background:#fffaf0"></div>
<div class="abs" style="left:1390px;top:735px;width:1px;height:26px;background:#fffaf0"></div>
<div class="abs" style="left:453px;top:762px;width:1046px;height:1px;background:#e2e2e2"></div>
<div class="abs" style="left:453px;top:791px;width:1046px;height:1px;background:#e2e2e2"></div>
<div class="t lbl" style="left:495px;top:710px;letter-spacing:-0.388px;">N</div>
<div class="t lbl" style="left:582px;top:710px;letter-spacing:-0.187px;">Номенклатура</div>
<div class="t lbl" style="left:886px;top:710px;letter-spacing:-0.189px;">Характеристика</div>
<div class="t lbl" style="left:1221px;top:710px;letter-spacing:-0.064px;">Цена</div>
<div class="t lbl" style="left:1399px;top:710px;letter-spacing:-0.015px;">Дата вывода</div>
<div class="cb" style="left:462px;top:741px;width:15px;height:14px"></div>
<svg class="abs" style="left:462px;top:741px;overflow:visible" width="16" height="15" viewBox="0 0 16 15" ><path d="M4 5.9 L7.4 9.9 L15 0" fill="none" stroke="#089a42" stroke-width="2.5" stroke-linecap="round" stroke-linejoin="miter"/></svg>
<div class="t " style="right:972px;top:741px;letter-spacing:-0.230px;">1</div>
<div class="t " style="left:582px;top:741px;letter-spacing:-0.141px;">Сок Добрый 1л Коробка Мультифрут</div>
<div class="t " style="left:887px;top:741px;letter-spacing:-0.035px;color:#8b8f98">&lt;характеристики не используются&gt;</div>
<div class="t " style="right:154px;top:741px;letter-spacing:-0.106px;">60,00</div>
<div class="cb" style="left:462px;top:770px;width:15px;height:14px"></div>
<svg class="abs" style="left:462px;top:770px;overflow:visible" width="16" height="15" viewBox="0 0 16 15" ><path d="M4 5.9 L7.4 9.9 L15 0" fill="none" stroke="#089a42" stroke-width="2.5" stroke-linecap="round" stroke-linejoin="miter"/></svg>
<div class="t " style="right:972px;top:770px;letter-spacing:-0.230px;">2</div>
<div class="t " style="left:582px;top:770px;letter-spacing:-0.154px;">Сок Добрый 1л Коробка Томатный</div>
<div class="t " style="left:887px;top:770px;letter-spacing:-0.035px;color:#8b8f98">&lt;характеристики не используются&gt;</div>
<div class="t " style="right:154px;top:770px;letter-spacing:-0.106px;">60,00</div>
</body>
</html>
